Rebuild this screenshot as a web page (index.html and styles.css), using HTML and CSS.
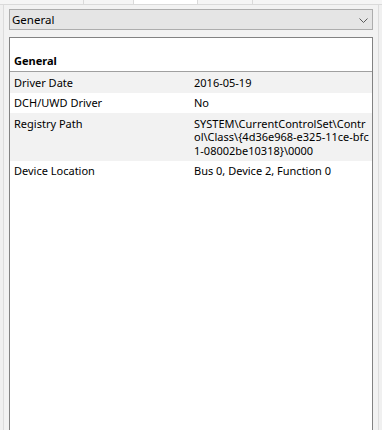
FILE: index.html
```html
<!DOCTYPE html>
<html>
<head>
<meta charset="utf-8">
<link rel="stylesheet" href="styles.css">
</head>
<body>
<div class="tabs">
  <div class="tab t1"></div>
  <div class="tab t2"></div>
  <div class="tab sel"></div>
  <div class="tab t4"></div>
  <div class="tab t5"></div>
</div>
<div class="frame">
  <div class="select">
    <span class="select-text">General</span>
    <svg class="chev" width="9" height="5" viewBox="0 0 9 5"><path d="M0.5 0.5 L4.5 4.5 L8.5 0.5" fill="none" stroke="#5a5a5a" stroke-width="1"/></svg>
  </div>
  <div class="panel">
    <div class="section">General</div>
    <div class="grid">
      <div class="row alt"><div class="key">Driver Date</div><div class="val">2016-05-19</div></div>
      <div class="row"><div class="key">DCH/UWD Driver</div><div class="val">No</div></div>
      <div class="row alt"><div class="key">Registry Path</div><div class="val wrap">SYSTEM\CurrentControlSet\Control\Class\{4d36e968-e325-11ce-bfc1-08002be10318}\0000</div></div>
      <div class="row"><div class="key">Device Location</div><div class="val">Bus 0, Device 2, Function 0</div></div>
    </div>
  </div>
</div>
</body>
</html>
```

FILE: styles.css
```css
html, body {
  margin: 0;
  padding: 0;
}
body {
  height: 430px;
  overflow: hidden;
  display: flex;
  flex-direction: column;
  background: #f0f0f0;
  font-family: "Noto Sans", "Open Sans", sans-serif;
  font-size: 11px;
  color: #000;
}
.tabs {
  display: flex;
  height: 4px;
  border-bottom: 1px solid #dadada;
  flex: none;
}
.tab {
  height: 4px;
  background: #f5f5f5;
  border-right: 1px solid #dadada;
}
.t1 { width: 83px; }
.t2 { width: 49px; }
.sel { width: 63px; background: #ffffff; }
.t4 { width: 54px; }
.t5 { flex: 1; border-right: none; }
.frame {
  flex: 1;
  display: flex;
  flex-direction: column;
  margin: 0 3px;
  padding: 4px 5px 0;
  border-left: 1px solid #dcdcdc;
  border-right: 1px solid #dcdcdc;
  background: #f2f2f2;
  min-height: 0;
}
.select {
  flex: none;
  display: flex;
  align-items: center;
  justify-content: space-between;
  height: 19px;
  border: 1px solid #adadad;
  background: #e5e5e5;
  padding: 0 4px 0 2px;
}
.select-text {
  font-size: 11.5px;
  line-height: 19px;
}
.chev { display: block; margin-top: 1px; }
.panel {
  flex: 1;
  margin-top: 7px;
  background: #fff;
  border: 1px solid #828282;
  border-bottom: none;
}
.section {
  font-weight: bold;
  padding: 15px 4px 3px;
  line-height: 15px;
  border-bottom: 1px solid #a0a0a0;
}
.row {
  display: grid;
  grid-template-columns: 184px 1fr;
  line-height: 13.5px;
}
.row.alt { background: #f2f2f2; }
.key { padding: 3.5px 4px; }
.val { padding: 3.5px 3px 3.5px 0; }
.wrap { word-break: break-all; }
```
